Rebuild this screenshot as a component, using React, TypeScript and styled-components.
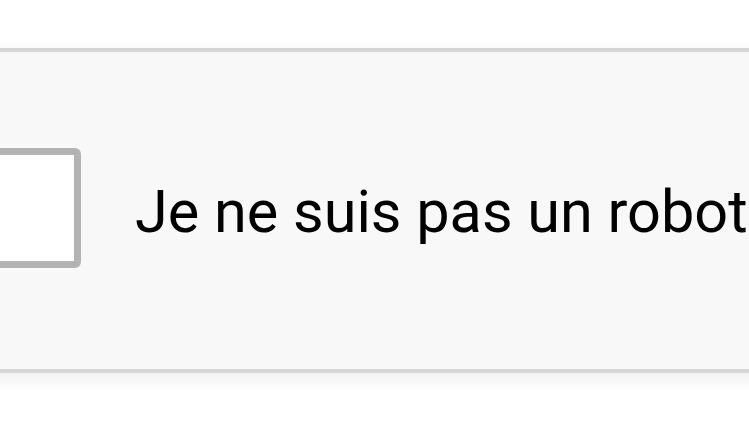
import React from "react";
import styled, { createGlobalStyle } from "styled-components";

const Global = createGlobalStyle`
  html, body { margin: 0; padding: 0; background: #ffffff; overflow: hidden; }
  body { width: 749px; height: 421px; }
`;

const Page = styled.div`
  width: 749px;
  height: 421px;
  padding-top: 48px;
  box-sizing: border-box;
  overflow: hidden;
`;

const Widget = styled.div`
  display: flex;
  align-items: center;
  gap: 54px;
  box-sizing: border-box;
  width: 1000px;
  height: 325px;
  margin-left: -48px;
  padding-left: 8px;
  padding-bottom: 6px;
  background: #f8f8f8;
  border: 4px solid #d5d5d5;
  border-radius: 12px;
  box-shadow: 0 6px 16px 2px rgba(0, 0, 0, 0.06);
`;

const CheckBox = styled.div`
  flex: none;
  box-sizing: border-box;
  width: 117px;
  height: 120px;
  background: #ffffff;
  border: 7px solid #b3b3b3;
  border-radius: 6px;
`;

const Label = styled.span`
  font-family: Roboto, "Noto Sans", sans-serif;
  font-size: 59.4px;
  color: #000000;
  white-space: nowrap;
  padding-top: 8px;
`;

export default function App() {
  return (
    <Page>
      <Global />
      <Widget>
        <CheckBox />
        <Label>Je ne suis pas un robot</Label>
      </Widget>
    </Page>
  );
}
